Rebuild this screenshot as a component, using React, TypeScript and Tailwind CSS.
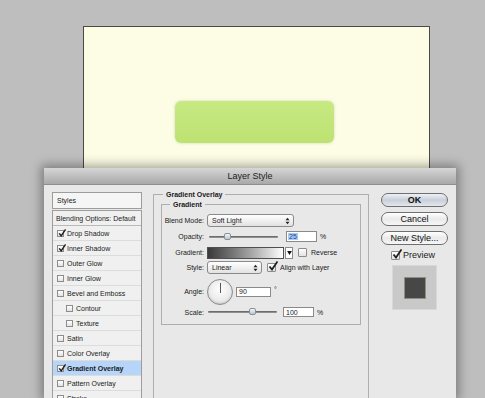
import React from 'react';

type Item = { label: string; checked?: boolean; indent?: boolean; active?: boolean };

const effects: Item[] = [
  { label: 'Drop Shadow', checked: true },
  { label: 'Inner Shadow', checked: true },
  { label: 'Outer Glow' },
  { label: 'Inner Glow' },
  { label: 'Bevel and Emboss' },
  { label: 'Contour', indent: true },
  { label: 'Texture', indent: true },
  { label: 'Satin' },
  { label: 'Color Overlay' },
  { label: 'Gradient Overlay', checked: true, active: true },
  { label: 'Pattern Overlay' },
  { label: 'Stroke' },
];

function Check({ checked, big }: { checked?: boolean; big?: boolean }) {
  return (
    <span
      className={`relative block shrink-0 border border-[#8c8c8c] bg-gradient-to-b from-white to-[#e2e2e2] ${
        big ? 'w-[9px] h-[9px] rounded-[1px]' : 'w-[7px] h-[7px]'
      }`}
    >
      {checked && (
        <svg
          viewBox="0 0 10 10"
          className={`absolute ${big ? 'w-[10px] h-[10px] -top-[3px] left-[0px]' : 'w-[8px] h-[8px] -top-[2px] left-[0px]'}`}
        >
          <path d="M1.5 5.5 L4 8.5 L9.5 0.5" fill="none" stroke="#1e1e1e" strokeWidth="1.8" />
        </svg>
      )}
    </span>
  );
}

function Stepper() {
  return (
    <svg viewBox="0 0 6 10" className="w-[5px] h-[8px]">
      <path d="M0.5 4 L3 0.8 L5.5 4 Z" fill="#222" />
      <path d="M0.5 6 L3 9.2 L5.5 6 Z" fill="#222" />
    </svg>
  );
}

function Slider({ thumb }: { thumb: number }) {
  const style = { left: thumb - 3 };
  return (
    <div className="relative w-[69px] h-[10px] flex items-center">
      <div className="w-full h-[2px] rounded-full bg-gradient-to-b from-[#5d5d5d] to-[#a0a0a0]" />
      <div
        className="absolute top-[1px] w-[7px] h-[7px] rounded-[2px] border border-[#8a8f98] bg-gradient-to-b from-[#f4f6fa] to-[#bcc4d0]"
        style={style}
      />
    </div>
  );
}

function Label({ children }: { children: React.ReactNode }) {
  return <span className="w-[42px] text-right shrink-0">{children}</span>;
}

function Button({ children, primary }: { children: React.ReactNode; primary?: boolean }) {
  return (
    <div
      className={`h-[14px] rounded-full border border-[#6f6f6f] flex items-center justify-center text-[9px] text-[#111] ${
        primary
          ? 'bg-gradient-to-b from-[#eef1f6] via-[#c9cfd9] to-[#e3e7ee] font-bold'
          : 'bg-gradient-to-b from-white via-[#eaeaea] to-[#f6f6f6]'
      }`}
    >
      {children}
    </div>
  );
}

export default function App() {
  return (
    <div className="w-[485px] h-[398px] overflow-hidden bg-[#bebebe] font-['Liberation_Sans',Arial,sans-serif] text-[#1a1a1a] leading-none">
      {/* document canvas */}
      <div className="h-[168px] pt-[26px] pl-[83px]">
        <div className="w-[347px] h-[142px] border-t border-x border-[#4a4a46] bg-[#fdfde6] pt-[74px] pl-[91px]">
          <div className="w-[159px] h-[42px] rounded-[6px] bg-gradient-to-b from-[#c7e982] to-[#bde272] shadow-[0_0_3px_rgba(120,140,60,0.35)]" />
        </div>
      </div>

      {/* Layer Style dialog */}
      <div className="ml-[44px] w-[412px] h-[230px] bg-[#e8e8e8] shadow-[0_0_10px_3px_rgba(0,0,0,0.35)] flex flex-col">
        <div className="h-[17px] shrink-0 bg-gradient-to-b from-[#d6d6d6] to-[#a9a9a9] border-b border-[#8e8e8e] flex items-center justify-center text-[9px] text-[#222]">
          Layer Style
        </div>

        <div className="flex pt-[7px] pl-[8px]">
          {/* styles list */}
          <div className="w-[90px] shrink-0 flex flex-col text-[7px]">
            <div className="h-[17px] border border-[#9d9d9d] bg-[#f5f5f5] flex items-center px-[4px]">Styles</div>
            <div className="mt-[1px] border border-[#9d9d9d] bg-[#f0f0f0] flex flex-col">
              <div className="h-[15px] border-b border-[#b9b9b9] flex items-center px-[3px]">Blending Options: Default</div>
              {effects.map((it) => (
                <div
                  key={it.label}
                  className={`h-[15px] shrink-0 flex items-center gap-[3px] border-b border-[#dcdcdc] ${
                    it.indent ? 'pl-[13px]' : 'pl-[4px]'
                  } ${it.active ? 'bg-[#b7d5f8] font-bold' : ''}`}
                >
                  <Check checked={it.checked} />
                  <span>{it.label}</span>
                </div>
              ))}
            </div>
          </div>

          {/* Gradient Overlay group */}
          <fieldset className="ml-[11px] -mt-[2px] w-[216px] h-[240px] border border-[#aeaeae] shrink-0">
            <legend className="ml-[9px] px-[3px] text-[7px] leading-[9px] font-bold">Gradient Overlay</legend>
            <fieldset className="mx-[7px] mt-[1px] border border-[#aeaeae] pb-[6px]">
              <legend className="ml-[8px] px-[3px] text-[7px] leading-[9px] font-bold">Gradient</legend>
              <div className="flex flex-col text-[7px] mt-[5px]">
                <div className="h-[13px] flex items-center gap-[3px]">
                  <Label>Blend Mode:</Label>
                  <div className="w-[87px] h-[13px] rounded-[3px] border border-[#8a8a8a] bg-gradient-to-b from-white to-[#e2e2e2] flex items-center justify-between pl-[4px] pr-[3px]">
                    <span>Soft Light</span>
                    <Stepper />
                  </div>
                </div>

                <div className="h-[13px] mt-[3px] flex items-center gap-[3px]">
                  <Label>Opacity:</Label>
                  <div className="ml-[2px]">
                    <Slider thumb={18} />
                  </div>
                  <div className="ml-[5px] w-[31px] h-[11px] border border-[#8a8a8a] bg-white flex items-center pl-[1px]">
                    <span className="bg-[#a9cdf6] text-[#1e3f8a] px-[1px]">25</span>
                  </div>
                  <span>%</span>
                </div>

                <div className="h-[13px] mt-[3px] flex items-center gap-[3px]">
                  <Label>Gradient:</Label>
                  <div className="w-[77px] h-[12px] border border-[#4f4f4f] bg-gradient-to-r from-[#3a3a3a] to-white" />
                  <div className="-ml-[2px] w-[8px] h-[12px] bg-white border border-[#8a8a8a] flex items-center justify-center">
                    <svg viewBox="0 0 6 5" className="w-[5px] h-[4px]">
                      <path d="M0 0 L6 0 L3 5 Z" fill="#111" />
                    </svg>
                  </div>
                  <div className="ml-[2px] flex">
                    <Check big />
                  </div>
                  <span className="ml-[1px]">Reverse</span>
                </div>

                <div className="h-[13px] mt-[2px] flex items-center gap-[3px]">
                  <Label>Style:</Label>
                  <div className="w-[55px] h-[13px] rounded-[3px] border border-[#8a8a8a] bg-gradient-to-b from-white to-[#e2e2e2] flex items-center justify-between pl-[4px] pr-[3px]">
                    <span>Linear</span>
                    <Stepper />
                  </div>
                  <div className="ml-[2px] flex">
                    <Check checked big />
                  </div>
                  <span className="ml-[1px]">Align with Layer</span>
                </div>

                <div className="h-[27px] mt-[4px] flex items-center gap-[3px]">
                  <Label>Angle:</Label>
                  <div className="relative w-[26px] h-[26px] rounded-full border border-[#8c8c8c] bg-[radial-gradient(circle_at_50%_40%,#ffffff,#dcdcdc)] shadow-[inset_0_-1px_2px_rgba(0,0,0,0.15)]">
                    <div className="absolute left-[12px] top-[3px] w-[1px] h-[10px] bg-[#555]" />
                  </div>
                  <div className="w-[35px] h-[10px] border border-[#8a8a8a] bg-white flex items-center pl-[2px]">90</div>
                  <span className="-mt-[5px]">°</span>
                </div>

                <div className="h-[12px] mt-[1px] flex items-center gap-[3px]">
                  <Label>Scale:</Label>
                  <div className="ml-[1px]">
                    <Slider thumb={44} />
                  </div>
                  <div className="ml-[3px] w-[31px] h-[10px] border border-[#8a8a8a] bg-white flex items-center pl-[2px]">100</div>
                  <span>%</span>
                </div>
              </div>
            </fieldset>
          </fieldset>

          {/* buttons */}
          <div className="ml-[12px] w-[67px] shrink-0 flex flex-col">
            <div className="mt-[1px]">
              <Button primary>OK</Button>
            </div>
            <div className="mt-[5px]">
              <Button>Cancel</Button>
            </div>
            <div className="mt-[5px]">
              <Button>New Style...</Button>
            </div>
            <div className="mt-[5px] h-[10px] pl-[10px] flex items-center gap-[3px] text-[9px]">
              <Check checked big />
              <span>Preview</span>
            </div>
            <div className="mt-[5px] ml-[11px] w-[45px] h-[45px] bg-[#c9c9c9] border border-[#d8d8d8] flex items-center justify-center">
              <div className="w-[22px] h-[22px] bg-[#474747] border border-[#8f8f7c]" />
            </div>
          </div>
        </div>
      </div>
    </div>
  );
}
